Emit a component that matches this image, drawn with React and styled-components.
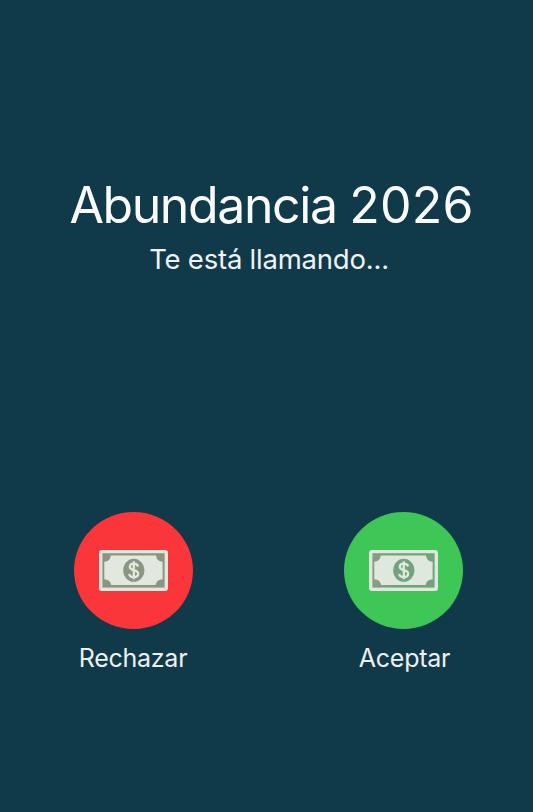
import React from 'react'
import styled, { createGlobalStyle } from 'styled-components'

const GlobalStyle = createGlobalStyle`
  * {
    box-sizing: border-box;
  }

  body {
    margin: 0;
    background: #103949;
  }
`

const CallScreen = styled.main`
  width: 533px;
  height: 812px;
  padding-top: 174px;
  overflow: hidden;
  background: #103949;
  color: #fafafa;
  font-family: Inter, 'Liberation Sans', sans-serif;
`

const CallerInfo = styled.header`
  display: flex;
  flex-direction: column;
  align-items: center;
  height: 338px;
`

const CallerName = styled.h1`
  margin: 1px 0 0 10px;
  font-size: 50px;
  font-weight: 400;
  line-height: 60px;
  letter-spacing: -1.4px;
  white-space: nowrap;
`

const CallerYear = styled.span`
  letter-spacing: 0.2px;
`

const CallStatus = styled.p`
  margin: 7px 0 0 5px;
  font-size: 27.5px;
  font-weight: 400;
  line-height: 34px;
  letter-spacing: -0.22px;
  color: #f0f2f3;
  white-space: nowrap;
`

const Actions = styled.div`
  display: flex;
  justify-content: space-between;
  padding: 0 70px 0 73.5px;
`

const Action = styled.div`
  display: flex;
  flex-direction: column;
  align-items: center;
  width: 119px;
`

const RoundButton = styled.button`
  display: flex;
  align-items: center;
  justify-content: center;
  width: 119px;
  height: 117px;
  padding: 0;
  border: 0;
  border-radius: 50%;
  background: ${({ $color }) => $color};
`

const ActionLabel = styled.span`
  margin: 14px 0 0 ${({ $shift }) => $shift};
  font-size: 25px;
  font-weight: 400;
  line-height: 30px;
  letter-spacing: -0.25px;
  color: #eef0f0;
  white-space: nowrap;
`

const BillIcon = styled.svg`
  display: block;
  width: 69px;
  height: 41px;
`

const Bill = ({ id, edge, ink, paper }) => (
  <BillIcon viewBox="0 0 69 41" fill="none">
    <defs>
      <linearGradient id={id} x1="0" x2="1" y1="0" y2="0">
        <stop offset="0" stopColor={edge} />
        <stop offset="0.4" stopColor={ink} />
      </linearGradient>
    </defs>
    <rect width="69" height="41" rx="3" fill={paper} />
    <rect x="3.4" y="3.2" width="62.2" height="34.4" fill={`url(#${id})`} />
    <path
      d="M11.8 5.4H57A7.4 7 0 0 0 63.6 11.8V29.2A7.4 7 0 0 0 56.6 34.9H12.2A7.4 7 0 0 0 5.3 29.2V11.8A7.4 7 0 0 0 11.8 5.4Z"
      fill={paper}
    />
    <ellipse cx="34.8" cy="20.3" rx="10.6" ry="11.5" fill={ink} />
    <path
      d="M39 16.4C38.6 14.4 37 13.6 34.8 13.6C32.4 13.6 30.8 14.8 30.8 16.7C30.8 21.3 39.2 18.8 39.2 23.8C39.2 25.9 37.4 27.1 34.8 27.1C32.3 27.1 30.5 26 30.2 23.9M34.8 11.3V29.2"
      stroke={paper}
      strokeWidth="2.3"
    />
  </BillIcon>
)

const App = () => {
  return (
    <>
      <GlobalStyle />
      <CallScreen>
        <CallerInfo>
          <CallerName>
            Abundancia <CallerYear>2026</CallerYear>
          </CallerName>
          <CallStatus>Te está llamando...</CallStatus>
        </CallerInfo>
        <Actions>
          <Action>
            <RoundButton type="button" $color="#fa363a">
              <Bill id="reject-ink" edge="#8a9683" ink="#8a9683" paper="#e2e8dd" />
            </RoundButton>
            <ActionLabel $shift="0">Rechazar</ActionLabel>
          </Action>
          <Action>
            <RoundButton type="button" $color="#3ec657">
              <Bill id="accept-ink" edge="#8c9a86" ink="#74a27e" paper="#dfe8dc" />
            </RoundButton>
            <ActionLabel $shift="2px">Aceptar</ActionLabel>
          </Action>
        </Actions>
      </CallScreen>
    </>
  )
}

export default App
